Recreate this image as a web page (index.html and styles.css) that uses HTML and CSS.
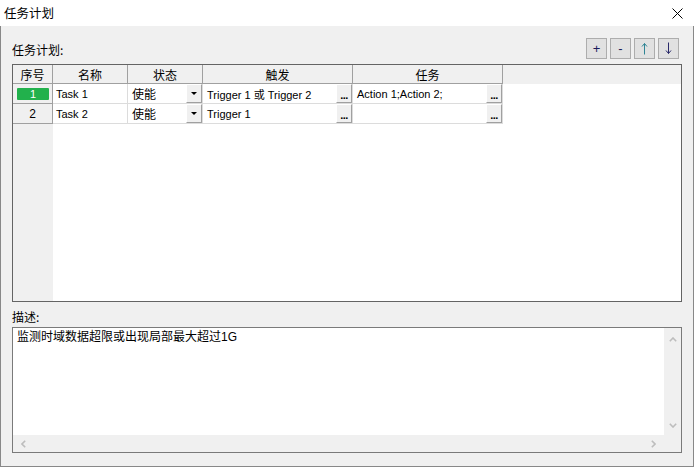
FILE: index.html
```html
<!DOCTYPE html>
<html lang="zh-CN">
<head>
    <meta charset="UTF-8">
    <title>任务计划</title>
    <link rel="stylesheet" href="styles.css">
</head>
<body>
    <div class="window">
        <!-- Title bar -->
        <div class="titlebar">
            <span class="title">任务计划</span>
            <svg class="close" width="11" height="11" viewBox="0 0 11 11">
                <path d="M0.5 0.5L10.5 10.5M10.5 0.5L0.5 10.5" stroke="#000" stroke-width="1" fill="none"/>
            </svg>
        </div>

        <div class="content">
            <div class="toolbar">
                <span class="label">任务计划:</span>
                <div class="tools">
                    <button class="tool">+</button>
                    <button class="tool">-</button>
                    <button class="tool">
                        <svg width="7" height="13" viewBox="0 0 7 13"><path d="M3.5 1.5V12.5M1 4.5L3.5 1.5L6 4.5" stroke="#2f8595" stroke-width="1" fill="none"/></svg>
                    </button>
                    <button class="tool">
                        <svg width="7" height="13" viewBox="0 0 7 13"><path d="M3.5 0.5V11.5M1 8.5L3.5 11.5L6 8.5" stroke="#2a2a6a" stroke-width="1" fill="none"/></svg>
                    </button>
                </div>
            </div>

            <!-- Task grid -->
            <div class="grid">
                <div class="row head">
                    <div class="cell c-no">序号</div>
                    <div class="cell c-name">名称</div>
                    <div class="cell c-state">状态</div>
                    <div class="cell c-trig">触发</div>
                    <div class="cell c-task">任务</div>
                </div>
                <div class="row">
                    <div class="cell c-no"><span class="current">1</span></div>
                    <div class="cell c-name">Task 1</div>
                    <div class="cell c-state"><span class="zh">使能</span><span class="pick drop"></span></div>
                    <div class="cell c-trig"><span>Trigger 1 或 Trigger 2</span><span class="pick dots">...</span></div>
                    <div class="cell c-task"><span>Action 1;Action 2;</span><span class="pick dots">...</span></div>
                </div>
                <div class="row">
                    <div class="cell c-no">2</div>
                    <div class="cell c-name">Task 2</div>
                    <div class="cell c-state"><span class="zh">使能</span><span class="pick drop"></span></div>
                    <div class="cell c-trig"><span>Trigger 1</span><span class="pick dots">...</span></div>
                    <div class="cell c-task"><span></span><span class="pick dots">...</span></div>
                </div>
            </div>

            <div class="desc-label">描述:</div>

            <!-- Description memo -->
            <div class="memo">
                <div class="memo-text">监测时域数据超限或出现局部最大超过1G</div>
                <div class="vscroll">
                    <svg width="8" height="5" viewBox="0 0 8 5"><polyline points="0.8,4.2 4,1 7.2,4.2" stroke="#bdbdbd" stroke-width="1.6" fill="none"/></svg>
                    <svg width="8" height="5" viewBox="0 0 8 5"><polyline points="0.8,0.8 4,4 7.2,0.8" stroke="#bdbdbd" stroke-width="1.6" fill="none"/></svg>
                </div>
                <div class="hscroll">
                    <svg width="5" height="8" viewBox="0 0 5 8"><polyline points="4.2,0.8 1,4 4.2,7.2" stroke="#bdbdbd" stroke-width="1.6" fill="none"/></svg>
                    <svg width="5" height="8" viewBox="0 0 5 8"><polyline points="0.8,0.8 4,4 0.8,7.2" stroke="#bdbdbd" stroke-width="1.6" fill="none"/></svg>
                </div>
                <div class="corner"></div>
            </div>
        </div>
    </div>
</body>
</html>
```

FILE: styles.css
```css
/* General */
body {
    margin: 0;
    font-family: "Liberation Sans", "Noto Sans CJK SC", sans-serif;
    font-size: 12px;
    color: #000;
    background: #fff;
}

.window {
    width: 694px;
    height: 467px;
    display: flex;
    flex-direction: column;
}

/* Title bar */
.titlebar {
    height: 26px;
    box-sizing: border-box;
    padding: 0 11px 0 4px;
    display: flex;
    align-items: center;
    justify-content: space-between;
    background: #fff;
}

.title {
    font-family: "Noto Sans CJK SC", sans-serif;
    font-size: 12.5px;
    line-height: 16px;
}

/* Dialog body */
.content {
    flex: 1;
    box-sizing: border-box;
    background: #f0f0f0;
    border: 1px solid #888;
    border-top: none;
    padding: 12px 11px 0;
    display: flex;
    flex-direction: column;
}

.toolbar {
    height: 21px;
    display: flex;
    justify-content: space-between;
    align-items: center;
    padding-right: 3px;
}

.label,
.desc-label {
    font-family: "Noto Sans CJK SC", sans-serif;
    font-size: 12px;
    line-height: 14px;
}

.label {
    padding-top: 3px;
}

.tools {
    display: flex;
    gap: 3px;
}

.tool {
    width: 21px;
    height: 21px;
    box-sizing: border-box;
    padding: 0;
    border: 1px solid #adadad;
    background: #e1e1e1;
    display: flex;
    align-items: center;
    justify-content: center;
    font-family: "Liberation Sans", sans-serif;
    font-size: 13px;
    color: #1a1a5a;
}

/* Grid */
.grid {
    margin-top: 5px;
    height: 238px;
    box-sizing: border-box;
    border: 1px solid #646464;
    background: linear-gradient(to right, #f0f0f0 40px, #fff 40px);
}

.row {
    display: flex;
    height: 20px;
}

.row.head {
    height: 19px;
    background: #f0f0f0;
}

.cell {
    box-sizing: border-box;
    border-right: 1px solid #dcdcdc;
    border-bottom: 1px solid #dcdcdc;
    background: #fff;
    display: flex;
    align-items: center;
    padding-left: 4px;
    font-size: 11px;
    white-space: nowrap;
    overflow: hidden;
}

.cell > span:first-child {
    flex: 1;
}

.head .cell {
    justify-content: center;
    padding: 0;
    border-color: #a0a0a0;
    background: #f0f0f0;
    font-family: "Noto Sans CJK SC", sans-serif;
    font-size: 12px;
}

.c-no { width: 40px; }
.c-name { width: 75px; padding-left: 3px; }
.c-state { width: 75px; }
.c-trig { width: 150px; }
.c-task { width: 150px; }

.row .c-no {
    justify-content: center;
    padding: 0;
    background: #f0f0f0;
    border-color: #a0a0a0;
    font-size: 12px;
}

.row .c-no .current {
    flex: none;
    width: 32px;
    height: 12px;
    margin-left: 1px;
    background: #22b14c;
    border-radius: 1px;
    color: #fff;
    font-size: 11px;
    line-height: 12px;
    text-align: center;
}

.zh {
    font-family: "Noto Sans CJK SC", sans-serif;
    font-size: 12px;
}

/* Cell buttons */
.pick {
    flex: none;
    width: 16px;
    height: 19px;
    box-sizing: border-box;
    background: #f0f0f0;
    border-left: 1px solid #fff;
    border-top: 1px solid #fff;
    border-right: 1px solid #a0a0a0;
    border-bottom: 1px solid #a0a0a0;
    display: flex;
    justify-content: center;
}

.drop {
    align-items: center;
}

.drop::after {
    content: "";
    border-left: 3px solid transparent;
    border-right: 3px solid transparent;
    border-top: 3px solid #000;
}

.dots {
    align-items: flex-end;
    font-size: 11px;
    font-weight: bold;
    line-height: 13px;
    letter-spacing: -0.5px;
}

/* Description */
.desc-label {
    margin-top: 8px;
}

.memo {
    margin-top: 3px;
    height: 126px;
    box-sizing: border-box;
    border: 1px solid #7a7a7a;
    background: #fff;
    display: grid;
    grid-template-columns: 1fr 17px;
    grid-template-rows: 1fr 17px;
}

.memo-text {
    padding: 1px 4px;
    line-height: 16px;
    font-size: 12px;
}

.vscroll {
    background: #f0f0f0;
    display: flex;
    flex-direction: column;
    align-items: center;
    justify-content: space-between;
    padding: 9px 0 7px;
}

.hscroll {
    background: #f0f0f0;
    display: flex;
    align-items: center;
    justify-content: space-between;
    padding: 0 8px;
}

.corner {
    background: #f0f0f0;
}
```
